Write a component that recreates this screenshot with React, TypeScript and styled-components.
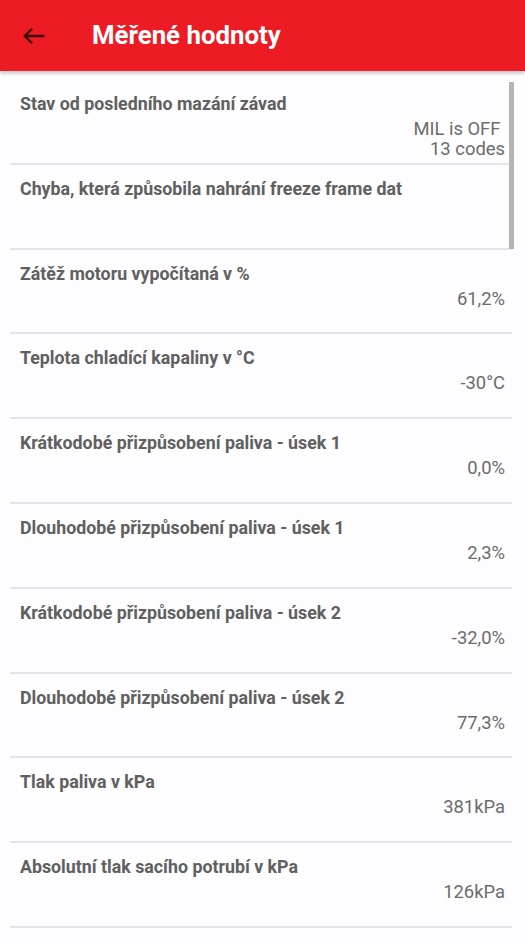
import React from "react";
import styled, { createGlobalStyle } from "styled-components";

const Global = createGlobalStyle`
  html, body { margin: 0; padding: 0; background: #fdfcfe; }
  body { font-family: Roboto, "Noto Sans", sans-serif; overflow: hidden; }
`;

const Page = styled.div`
  width: 525px;
  height: 944px;
  overflow: hidden;
  background: #fdfcfe;
  position: relative;
`;

const AppBar = styled.header`
  height: 71px;
  background: #ec1b24;
  display: flex;
  align-items: center;
  box-shadow: 0 2px 4px rgba(0, 0, 0, 0.25);
  position: relative;
  z-index: 2;
`;

const BackButton = styled.div`
  width: 68px;
  height: 71px;
  display: flex;
  align-items: center;
  justify-content: center;
  margin-right: 24px;
`;

const Title = styled.h1`
  margin: 0 0 2px 0;
  color: #ffffff;
  font-size: 25.8px;
  font-weight: 700;
  font-family: Roboto, sans-serif;
`;

const List = styled.div`
  padding: 9px 13px 0 10px;
  position: relative;
`;

const Row = styled.div`
  height: 84.8px;
  box-sizing: border-box;
  border-bottom: 2px solid #e4e3e5;
  padding: 13px 7px 0 10px;
  display: flex;
  flex-direction: column;
`;

const Label = styled.div`
  font-size: 17.8px;
  font-weight: 700;
  color: #606060;
  line-height: 21px;
  white-space: nowrap;
`;

const Value = styled.div`
  font-size: 18.4px;
  font-weight: 400;
  color: #6c6c6c;
  line-height: 20px;
  text-align: right;
  margin-top: 5px;
  white-space: pre-line;
`;

const Scrollbar = styled.div`
  position: absolute;
  right: 11px;
  top: 82px;
  width: 5px;
  height: 167px;
  background: #b5b5b5;
`;

const rows: [string, string][] = [
  ["Stav od posledního mazání závad", "MIL is OFF\u00a0\n13 codes"],
  ["Chyba, která způsobila nahrání freeze frame dat", ""],
  ["Zátěž motoru vypočítaná v %", "61,2%"],
  ["Teplota chladící kapaliny v °C", "-30°C"],
  ["Krátkodobé přizpůsobení paliva - úsek 1", "0,0%"],
  ["Dlouhodobé přizpůsobení paliva - úsek 1", "2,3%"],
  ["Krátkodobé přizpůsobení paliva - úsek 2", "-32,0%"],
  ["Dlouhodobé přizpůsobení paliva - úsek 2", "77,3%"],
  ["Tlak paliva v kPa", "381kPa"],
  ["Absolutní tlak sacího potrubí v kPa", "126kPa"],
];

export default function App() {
  return (
    <Page>
      <Global />
      <AppBar>
        <BackButton>
          <svg width="24" height="18" viewBox="0 0 24 18" fill="none">
            <path d="M22.5 9H3M10 1.8L2.8 9 10 16.2" stroke="#3b0b0d" strokeWidth="2.3" strokeLinecap="butt" />
          </svg>
        </BackButton>
        <Title>Měřené hodnoty</Title>
      </AppBar>
      <List>
        {rows.map(([l, v], i) => (
          <Row key={i}>
            <Label>{l}</Label>
            <Value>{v}</Value>
          </Row>
        ))}
      </List>
      <Scrollbar />
    </Page>
  );
}
